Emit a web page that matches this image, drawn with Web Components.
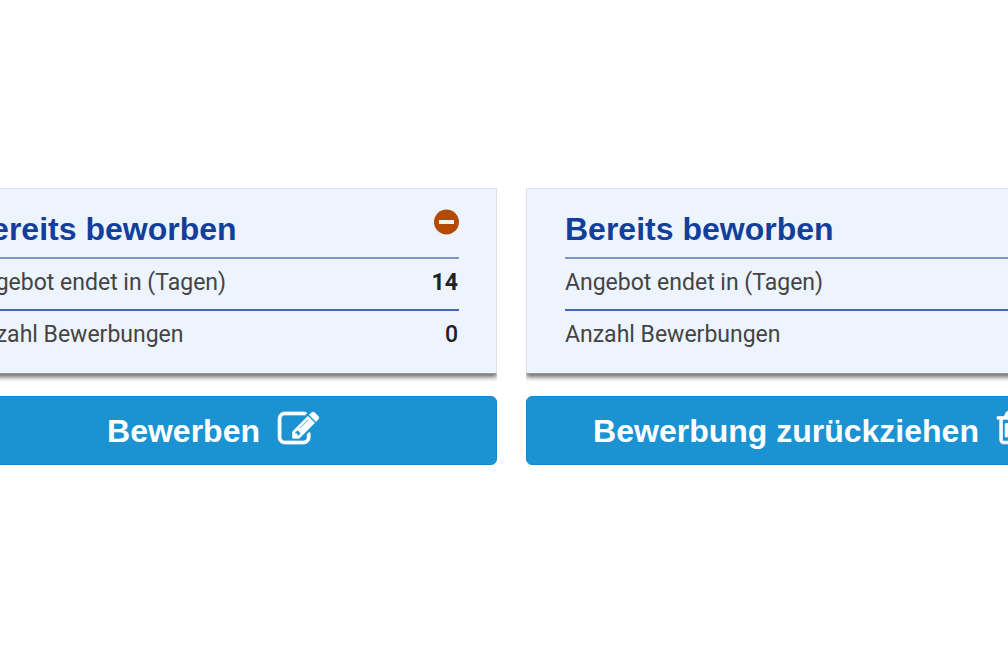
<!DOCTYPE html>
<html lang="de">
<head>
<meta charset="utf-8">
<title>Bewerbungen</title>
<style>
body { margin: 0; background: #fff; overflow-x: hidden; font-family: "Liberation Sans", Arial, sans-serif; }
</style>
</head>
<body>
<offer-board>
  <offer-panel heading="Bereits beworben" days="14" count="0">
    <action-button slot="action" icon="edit">Bewerben</action-button>
  </offer-panel>
  <offer-panel heading="Bereits beworben" days="14" count="0">
    <action-button slot="action" icon="trash">Bewerbung zurückziehen</action-button>
  </offer-panel>
</offer-board>
<script>
const icons = {
  edit: '<svg viewBox="0 128 1792 1408" width="41" height="32" aria-hidden="true"><path d="M888 1184l116-116-152-152-116 116v56h96v96h56zm440-720q-16-16-33 1l-350 350q-17 17-1 33t33-1l350-350q17-17 1-33zm80 594v190q0 119-84.5 203.5t-203.5 84.5h-832q-119 0-203.5-84.5t-84.5-203.5v-832q0-119 84.5-203.5t203.5-84.5h832q63 0 117 25 15 7 18 23 3 17-9 29l-49 49q-14 14-32 8-23-6-45-6h-832q-66 0-113 47t-47 113v832q0 66 47 113t113 47h832q66 0 113-47t47-113v-126q0-13 9-22l64-64q15-15 35-7t20 29zm-96-738l288 288-672 672h-288v-288zm444 132l-92 92-288-288 92-92q28-28 68-28t68 28l152 152q28 28 28 68t-28 68z"/></svg>',
  trash: '<svg viewBox="192 128 1408 1536" width="30" height="33" aria-hidden="true"><path d="M704 736v576q0 14-9 23t-23 9h-64q-14 0-23-9t-9-23v-576q0-14 9-23t23-9h64q14 0 23 9t9 23zm256 0v576q0 14-9 23t-23 9h-64q-14 0-23-9t-9-23v-576q0-14 9-23t23-9h64q14 0 23 9t9 23zm256 0v576q0 14-9 23t-23 9h-64q-14 0-23-9t-9-23v-576q0-14 9-23t23-9h64q14 0 23 9t9 23zm128 724v-948h-896v948q0 22 7 40.5t14.5 27 10.5 8.5h832q3 0 10.5-8.5t14.5-27 7-40.5zm-672-1076h448l-48-117q-7-9-17-11h-317q-10 2-17 11zm928 32v64q0 14-9 23t-23 9h-96v948q0 83-47 143.5t-113 60.5h-832q-66 0-113-58.5t-47-141.5v-952h-96q-14 0-23-9t-9-23v-64q0-14 9-23t23-9h309l70-167q15-37 54-63t79-26h320q40 0 79 26t54 63l70 167h309q14 0 23 9t9 23z"/></svg>'
};

customElements.define('offer-board', class extends HTMLElement {
  constructor() {
    super();
    this.attachShadow({ mode: 'open' }).innerHTML = `
      <style>
        /* The board is wider than the window and runs past both of its sides. */
        :host { display: grid; grid-template-columns: 1fr 1fr; gap: 29px; margin: 0 -86px 0 -71px; padding-top: 188px; }
      </style>
      <slot></slot>`;
  }
});

customElements.define('offer-panel', class extends HTMLElement {
  connectedCallback() {
    if (this.shadowRoot) return;
    const root = this.attachShadow({ mode: 'open' });
    root.innerHTML = `
      <style>
        :host { display: flex; flex-direction: column; gap: 22px; min-width: 0; }
        section { padding: 16px 37px 12px 38px; background: #edf4fe; border: 1px solid #dcdfe4; border-bottom-color: #999;
          box-shadow: 0 3px 5px #666; clip-path: inset(0 0 -10px 0); }
        header { display: flex; justify-content: space-between; align-items: flex-start; height: 52px; }
        h2 { margin: 0; font-size: 32px; line-height: 48px; color: #133f9c; white-space: nowrap; }
        header svg { margin-top: 4px; }
        table { width: 100%; border-collapse: collapse; font-size: 23px; line-height: 48px; color: #444; font-family: Roboto, "Liberation Sans", sans-serif; }
        th, td { padding: 0 0 2px; border-top: 2px solid #4768b0; }
        tr:first-child > * { border-top-color: #8296c5; }
        th { text-align: left; font-weight: 400; }
        td { text-align: right; padding-right: 1px; font-weight: 700; color: #222; }
        tr:last-child td { font-weight: 500; }
      </style>
      <section>
        <header>
          <h2></h2>
          <svg viewBox="0 0 26 26" width="26" height="26" role="img" aria-label="Beworben"><circle cx="13.500" cy="13" r="12.500" fill="#b34a06"/><rect x="6" y="11" width="15" height="4" fill="#f5f0f2"/></svg>
        </header>
        <table>
          <tr><th scope="row">Angebot endet in (Tagen)</th><td class="days"></td></tr>
          <tr><th scope="row">Anzahl Bewerbungen</th><td class="count"></td></tr>
        </table>
      </section>
      <slot name="action"></slot>`;
    root.querySelector('h2').textContent = this.getAttribute('heading');
    root.querySelector('.days').textContent = this.getAttribute('days');
    root.querySelector('.count').textContent = this.getAttribute('count');
  }
});

customElements.define('action-button', class extends HTMLElement {
  connectedCallback() {
    if (this.shadowRoot) return;
    this.attachShadow({ mode: 'open' }).innerHTML = `
      <style>
        :host { display: block; }
        button { display: flex; justify-content: center; align-items: center; gap: 18px; width: 100%; height: 69px; padding: 0;
          border: 1px solid #1488cb; border-radius: 6px; background: #1b93d3; color: #fff; font: bold 32px/40px "Liberation Sans", Arial, sans-serif; white-space: nowrap; cursor: pointer; }
        svg { fill: currentColor; stroke: currentColor; stroke-width: 36; overflow: visible; margin-bottom: 6px; }
      </style>
      <button type="button"><slot></slot>${icons[this.getAttribute('icon')]}</button>`;
  }
});
</script>
</body>
</html>
